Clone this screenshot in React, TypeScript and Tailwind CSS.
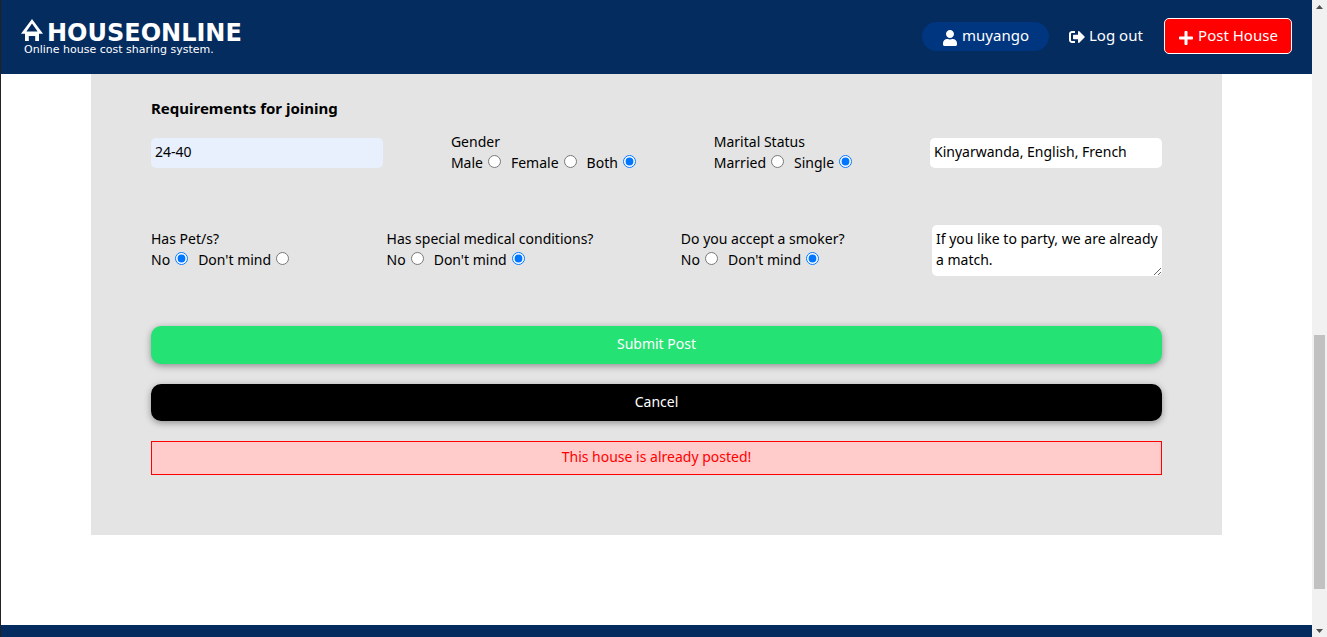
import { FaPlus, FaSignOutAlt, FaUser } from "react-icons/fa";

type Choice = { label: string; checked?: boolean };

function RadioGroup({
  legend,
  name,
  choices,
  className,
}: {
  legend: string;
  name: string;
  choices: Choice[];
  className: string;
}) {
  return (
    <fieldset className={`whitespace-nowrap ${className}`}>
      <legend className="leading-5">{legend}</legend>
      <div className="flex">
        {choices.map((choice) => (
          <label key={choice.label} className="mr-[10px] flex items-start gap-[5px] leading-[22px]">
            {choice.label}
            <input
              type="radio"
              name={name}
              defaultChecked={choice.checked}
              className="mt-[3px] size-[13px]"
            />
          </label>
        ))}
      </div>
    </fieldset>
  );
}

function Logo() {
  return (
    <a href="#home" className="flex flex-col font-['DejaVu_Sans',sans-serif] text-white">
      <span className="flex h-[26px] items-end gap-1 text-2xl leading-[22px] font-bold">
        <svg width="22" height="24" viewBox="0 0 22 24" fill="currentColor" className="self-start" aria-hidden="true">
          <path
            fillRule="evenodd"
            d="M11 1 22 15.8H18V23H14.2V18H7.8V23H4V15.8H0ZM11 5.6 5.4 13.4H16.6Z"
          />
        </svg>
        HOUSEONLINE
      </span>
      <span className="pl-[3px] text-[11px] leading-[11px]">Online house cost sharing system.</span>
    </a>
  );
}

function Header() {
  return (
    <header className="flex h-[74px] items-center justify-between bg-[#052c5f] px-5 pb-[2px] text-[15px] text-white">
      <Logo />
      <nav className="flex items-center gap-5">
        <a href="#profile" className="flex h-[29px] w-[127px] items-center justify-center gap-1 rounded-full bg-[#003580]">
          <FaUser className="mt-[3px] size-4" />
          muyango
        </a>
        <a href="#logout" className="flex w-[75px] items-center gap-1 whitespace-nowrap">
          <FaSignOutAlt className="mt-[3px] size-4 shrink-0" />
          Log out
        </a>
        <button
          type="button"
          className="flex h-9 w-32 items-center justify-center gap-1 rounded-[5px] border border-white bg-[#ff0000] whitespace-nowrap"
        >
          <FaPlus className="mt-[3px] size-4 shrink-0" />
          Post House
        </button>
      </nav>
    </header>
  );
}

function Scrollbar() {
  return (
    <div className="flex w-[15px] shrink-0 flex-col items-center bg-[#f1f1f1]" aria-hidden="true">
      <svg width="15" height="15" viewBox="0 0 15 15" fill="#505050">
        <path d="M4 9H11L7.5 5Z" />
      </svg>
      <div className="flex w-full grow flex-col items-center">
        <div className="grow-[320]" />
        <div className="w-[11px] grow-[254] bg-[#c1c1c1]" />
        <div className="grow-[33]" />
      </div>
      <svg width="15" height="15" viewBox="0 0 15 15" fill="#505050">
        <path d="M4 7H11L7.5 11Z" />
      </svg>
    </div>
  );
}

export default function App() {
  return (
    <div className="flex min-h-screen bg-white font-['Noto_Sans',sans-serif] text-sm text-black">
      <div className="flex grow flex-col border-l border-[#222]">
        <Header />
        <main className="px-[90px] pb-[90px]">
          <form className="bg-[#e4e4e4] px-[60px] pt-6 pb-[60px]" onSubmit={(e) => e.preventDefault()}>
            <h2 className="text-[15px] leading-5 font-bold">Requirements for joining</h2>

            <div className="mt-[14px] flex h-[93px] items-start justify-between">
              <input
                aria-label="Age range"
                defaultValue="24-40"
                className="mt-[6px] h-[30px] w-[232px] rounded-[5px] bg-[#e8f0fe] px-1 pb-[3px]"
              />
              <RadioGroup
                legend="Gender"
                name="gender"
                className="w-[195px]"
                choices={[{ label: "Male" }, { label: "Female" }, { label: "Both", checked: true }]}
              />
              <RadioGroup
                legend="Marital Status"
                name="marital"
                className="w-[148px]"
                choices={[{ label: "Married" }, { label: "Single", checked: true }]}
              />
              <input
                aria-label="Languages"
                defaultValue="Kinyarwanda, English, French"
                className="mt-[6px] h-[30px] w-[232px] rounded-[5px] bg-white px-1 pb-[3px]"
              />
            </div>

            <div className="flex items-start justify-between">
              <RadioGroup
                legend="Has Pet/s?"
                name="pets"
                className="mt-1 w-[147px]"
                choices={[{ label: "No", checked: true }, { label: "Don't mind" }]}
              />
              <RadioGroup
                legend="Has special medical conditions?"
                name="medical"
                className="mt-1 w-[204px]"
                choices={[{ label: "No" }, { label: "Don't mind", checked: true }]}
              />
              <RadioGroup
                legend="Do you accept a smoker?"
                name="smoker"
                className="mt-1 w-[160px]"
                choices={[{ label: "No" }, { label: "Don't mind", checked: true }]}
              />
              <textarea
                aria-label="Description"
                defaultValue="If you like to party, we are already a match."
                className="h-[51px] w-[230px] resize rounded-[5px] bg-white px-1 py-[3px] leading-[21px]"
              />
            </div>

            <div className="mt-[50px] flex flex-col gap-5">
              <button
                type="submit"
                className="h-[38px] rounded-[10px] bg-[#25e275] pb-[2px] text-white shadow-[0_2px_7px_0_rgba(0,0,0,0.38)]"
              >
                Submit Post
              </button>
              <button
                type="button"
                className="h-[37px] rounded-[10px] bg-black pb-[2px] text-white shadow-[0_2px_7px_0_rgba(0,0,0,0.38)]"
              >
                Cancel
              </button>
              <p role="alert" className="border border-[#ff0000] bg-[#ffcccb] pt-[5px] pb-[7px] text-center leading-5 text-[#ff0000]">
                This house is already posted!
              </p>
            </div>
          </form>
        </main>
        <footer className="min-h-3 grow bg-[#052c5f]" />
      </div>
      <Scrollbar />
    </div>
  );
}
